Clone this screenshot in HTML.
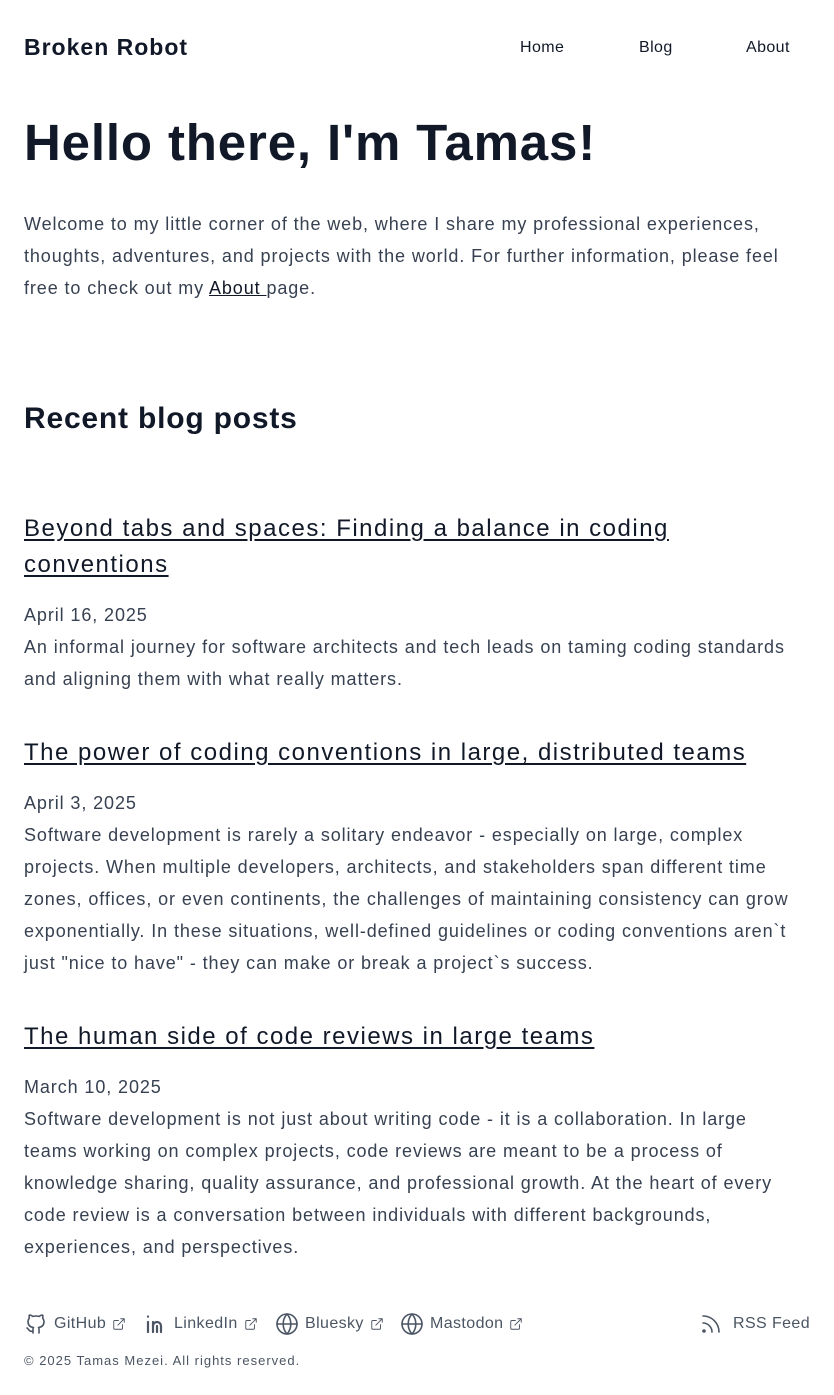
<!DOCTYPE html>
<html><head><meta charset="utf-8"><style>
*{margin:0;padding:0;box-sizing:border-box}
body{width:834px;height:1395px;background:#fff;font-family:"Liberation Sans",sans-serif;color:#374151;position:relative;overflow:hidden}
.a{position:absolute;white-space:nowrap}
.logo{left:24px;top:34px;font-size:23px;font-weight:bold;color:#111827;letter-spacing:1px}
.nav{top:39px;font-size:16px;color:#111827;letter-spacing:.4px}
h1{left:24px;top:113px;font-size:51px;font-weight:bold;color:#111827;letter-spacing:.85px}
.p{left:24px;font-size:18px;line-height:32px;letter-spacing:.9px}
h2{left:24px;top:402px;font-size:30px;font-weight:bold;color:#111827;letter-spacing:.8px}
.t{left:24px;font-size:24px;line-height:36px;color:#111827;text-decoration:underline;text-underline-offset:3px;letter-spacing:1.5px}
a{color:#111827}
.f{top:1312px;font-size:16px;color:#4b5563;display:flex;align-items:center;gap:6px;letter-spacing:.4px}
svg{stroke:#4b5563;fill:none;stroke-width:1.6;stroke-linecap:round;stroke-linejoin:round}
</style></head><body>
<div class="a logo">Broken Robot</div>
<div class="a nav" style="left:520px">Home</div>
<div class="a nav" style="left:639px">Blog</div>
<div class="a nav" style="left:746px">About</div>
<h1 class="a">Hello there, I'm Tamas!</h1>
<div class="a p" style="top:208px">Welcome to my little corner of the web, where I share my professional experiences,<br>thoughts, adventures, and projects with the world. For further information, please feel<br>free to check out my <a href="#" style="color:#111827">About </a>page.</div>
<h2 class="a">Recent blog posts</h2>
<div class="a t" style="top:511px">Beyond tabs and spaces: Finding a balance in coding<br>conventions</div>
<div class="a p" style="top:599px">April 16, 2025<br>An informal journey for software architects and tech leads on taming coding standards<br>and aligning them with what really matters.</div>
<div class="a t" style="top:735px">The power of coding conventions in large, distributed teams</div>
<div class="a p" style="top:787px">April 3, 2025<br>Software development is rarely a solitary endeavor - especially on large, complex<br>projects. When multiple developers, architects, and stakeholders span different time<br>zones, offices, or even continents, the challenges of maintaining consistency can grow<br>exponentially. In these situations, well-defined guidelines or coding conventions aren`t<br>just "nice to have" - they can make or break a project`s success.</div>
<div class="a t" style="top:1019px">The human side of code reviews in large teams</div>
<div class="a p" style="top:1071px">March 10, 2025<br>Software development is not just about writing code - it is a collaboration. In large<br>teams working on complex projects, code reviews are meant to be a process of<br>knowledge sharing, quality assurance, and professional growth. At the heart of every<br>code review is a conversation between individuals with different backgrounds,<br>experiences, and perspectives.</div>

<div class="a f" style="left:24px"><svg width="24" height="24" viewBox="0 0 24 24"><path d="M9 19c-4.3 1.4-4.3-2.5-6-3m12 5v-3.5c0-1 .1-1.4-.5-2 2.8-.3 5.5-1.4 5.5-6a4.6 4.6 0 0 0-1.3-3.2 4.2 4.2 0 0 0-.1-3.2s-1.1-.3-3.5 1.3a12.3 12.3 0 0 0-6.2 0C6.5 2.8 5.4 3.1 5.4 3.1a4.2 4.2 0 0 0-.1 3.2A4.6 4.6 0 0 0 4 9.5c0 4.6 2.7 5.7 5.5 6-.6.6-.6 1.2-.5 2V21"/></svg>GitHub<svg width="14" height="14" viewBox="0 0 24 24"><path d="M18 13v6a2 2 0 0 1-2 2H5a2 2 0 0 1-2-2V8a2 2 0 0 1 2-2h6M15 3h6v6M10 14 21 3"/></svg></div>
<div class="a f" style="left:144px"><svg width="24" height="24" viewBox="0 0 24 24" style="stroke-width:2.2"><path d="M4 10v10M4 4.5v.1M9 20V10m0 4a4 4 0 0 1 8 0v6m-4 0v-6"/></svg>LinkedIn<svg width="14" height="14" viewBox="0 0 24 24"><path d="M18 13v6a2 2 0 0 1-2 2H5a2 2 0 0 1-2-2V8a2 2 0 0 1 2-2h6M15 3h6v6M10 14 21 3"/></svg></div>
<div class="a f" style="left:275px"><svg width="24" height="24" viewBox="0 0 24 24"><circle cx="12" cy="12" r="10"/><path d="M2 12h20M12 2a15 15 0 0 1 0 20 15 15 0 0 1 0-20"/></svg>Bluesky<svg width="14" height="14" viewBox="0 0 24 24"><path d="M18 13v6a2 2 0 0 1-2 2H5a2 2 0 0 1-2-2V8a2 2 0 0 1 2-2h6M15 3h6v6M10 14 21 3"/></svg></div>
<div class="a f" style="left:400px"><svg width="24" height="24" viewBox="0 0 24 24"><circle cx="12" cy="12" r="10"/><path d="M2 12h20M12 2a15 15 0 0 1 0 20 15 15 0 0 1 0-20"/></svg>Mastodon<svg width="14" height="14" viewBox="0 0 24 24"><path d="M18 13v6a2 2 0 0 1-2 2H5a2 2 0 0 1-2-2V8a2 2 0 0 1 2-2h6M15 3h6v6M10 14 21 3"/></svg></div>
<div class="a f" style="left:699px;gap:10px"><svg width="24" height="24" viewBox="0 0 24 24"><path d="M4 11a9 9 0 0 1 9 9M4 4a16 16 0 0 1 16 16"/><circle cx="5" cy="19" r="1" fill="#4b5563"/></svg>RSS Feed</div>
<div class="a" style="left:24px;top:1353px;font-size:13px;color:#4b5563;letter-spacing:1px">© 2025 Tamas Mezei. All rights reserved.</div>
</body></html>
